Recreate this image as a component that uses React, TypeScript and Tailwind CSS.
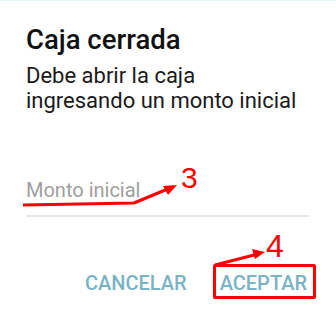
export default function App() {
  return (
    <div className="relative w-[336px] h-[314px] bg-white overflow-hidden font-['Roboto',sans-serif]">
      <div className="h-px bg-[#e3f4f8]" />

      {/* Dialog body */}
      <div className="flex flex-col px-[26px] pt-[23px]">
        <h1 className="text-[27.5px] leading-[32px] font-medium text-[#111]">Caja cerrada</h1>
        <p className="mt-[7px] text-[22px] leading-[25px] text-[#1a1a1a]">
          Debe abrir la caja
          <br />
          ingresando un monto inicial
        </p>

        <div className="mt-[65px] w-[283px] border-b-2 border-[#e6e6e6] pb-[11px]">
          <span className="text-[20px] leading-[24px] text-[#9e9e9e]">Monto inicial</span>
        </div>
      </div>

      {/* Actions */}
      <div className="flex justify-end gap-[33px] pr-[29px] pt-[54px]">
        <button className="text-[20px] leading-[24px] font-medium text-[#78b3c6]">CANCELAR</button>
        <button className="text-[20px] leading-[24px] font-medium text-[#78b3c6]">ACEPTAR</button>
      </div>

      {/* Annotations */}
      <div className="absolute left-[213px] top-[264px] w-[103px] h-[35px] border-[3px] border-[#ff0000] rounded-[2px]" />
      <span className="absolute left-[181px] top-[161px] text-[30px] leading-[34px] text-[#ff0000] font-['Liberation_Sans',sans-serif]">3</span>
      <span className="absolute left-[266px] top-[228px] text-[32px] leading-[36px] text-[#ff0000] font-['Liberation_Sans',sans-serif]">4</span>
      <svg className="absolute left-0 top-0" width="336" height="314" viewBox="0 0 336 314">
        <path d="M23 205 L134 203 L170 188" stroke="#ff0000" strokeWidth="3" fill="none" strokeLinejoin="round" />
        <path d="M177 185 L163 186 L168 195 Z" fill="#ff0000" />
        <path d="M215 265 L258 254" stroke="#ff0000" strokeWidth="3" fill="none" />
        <path d="M265 252 L252 249 L255 259 Z" fill="#ff0000" />
      </svg>
    </div>
  );
}
